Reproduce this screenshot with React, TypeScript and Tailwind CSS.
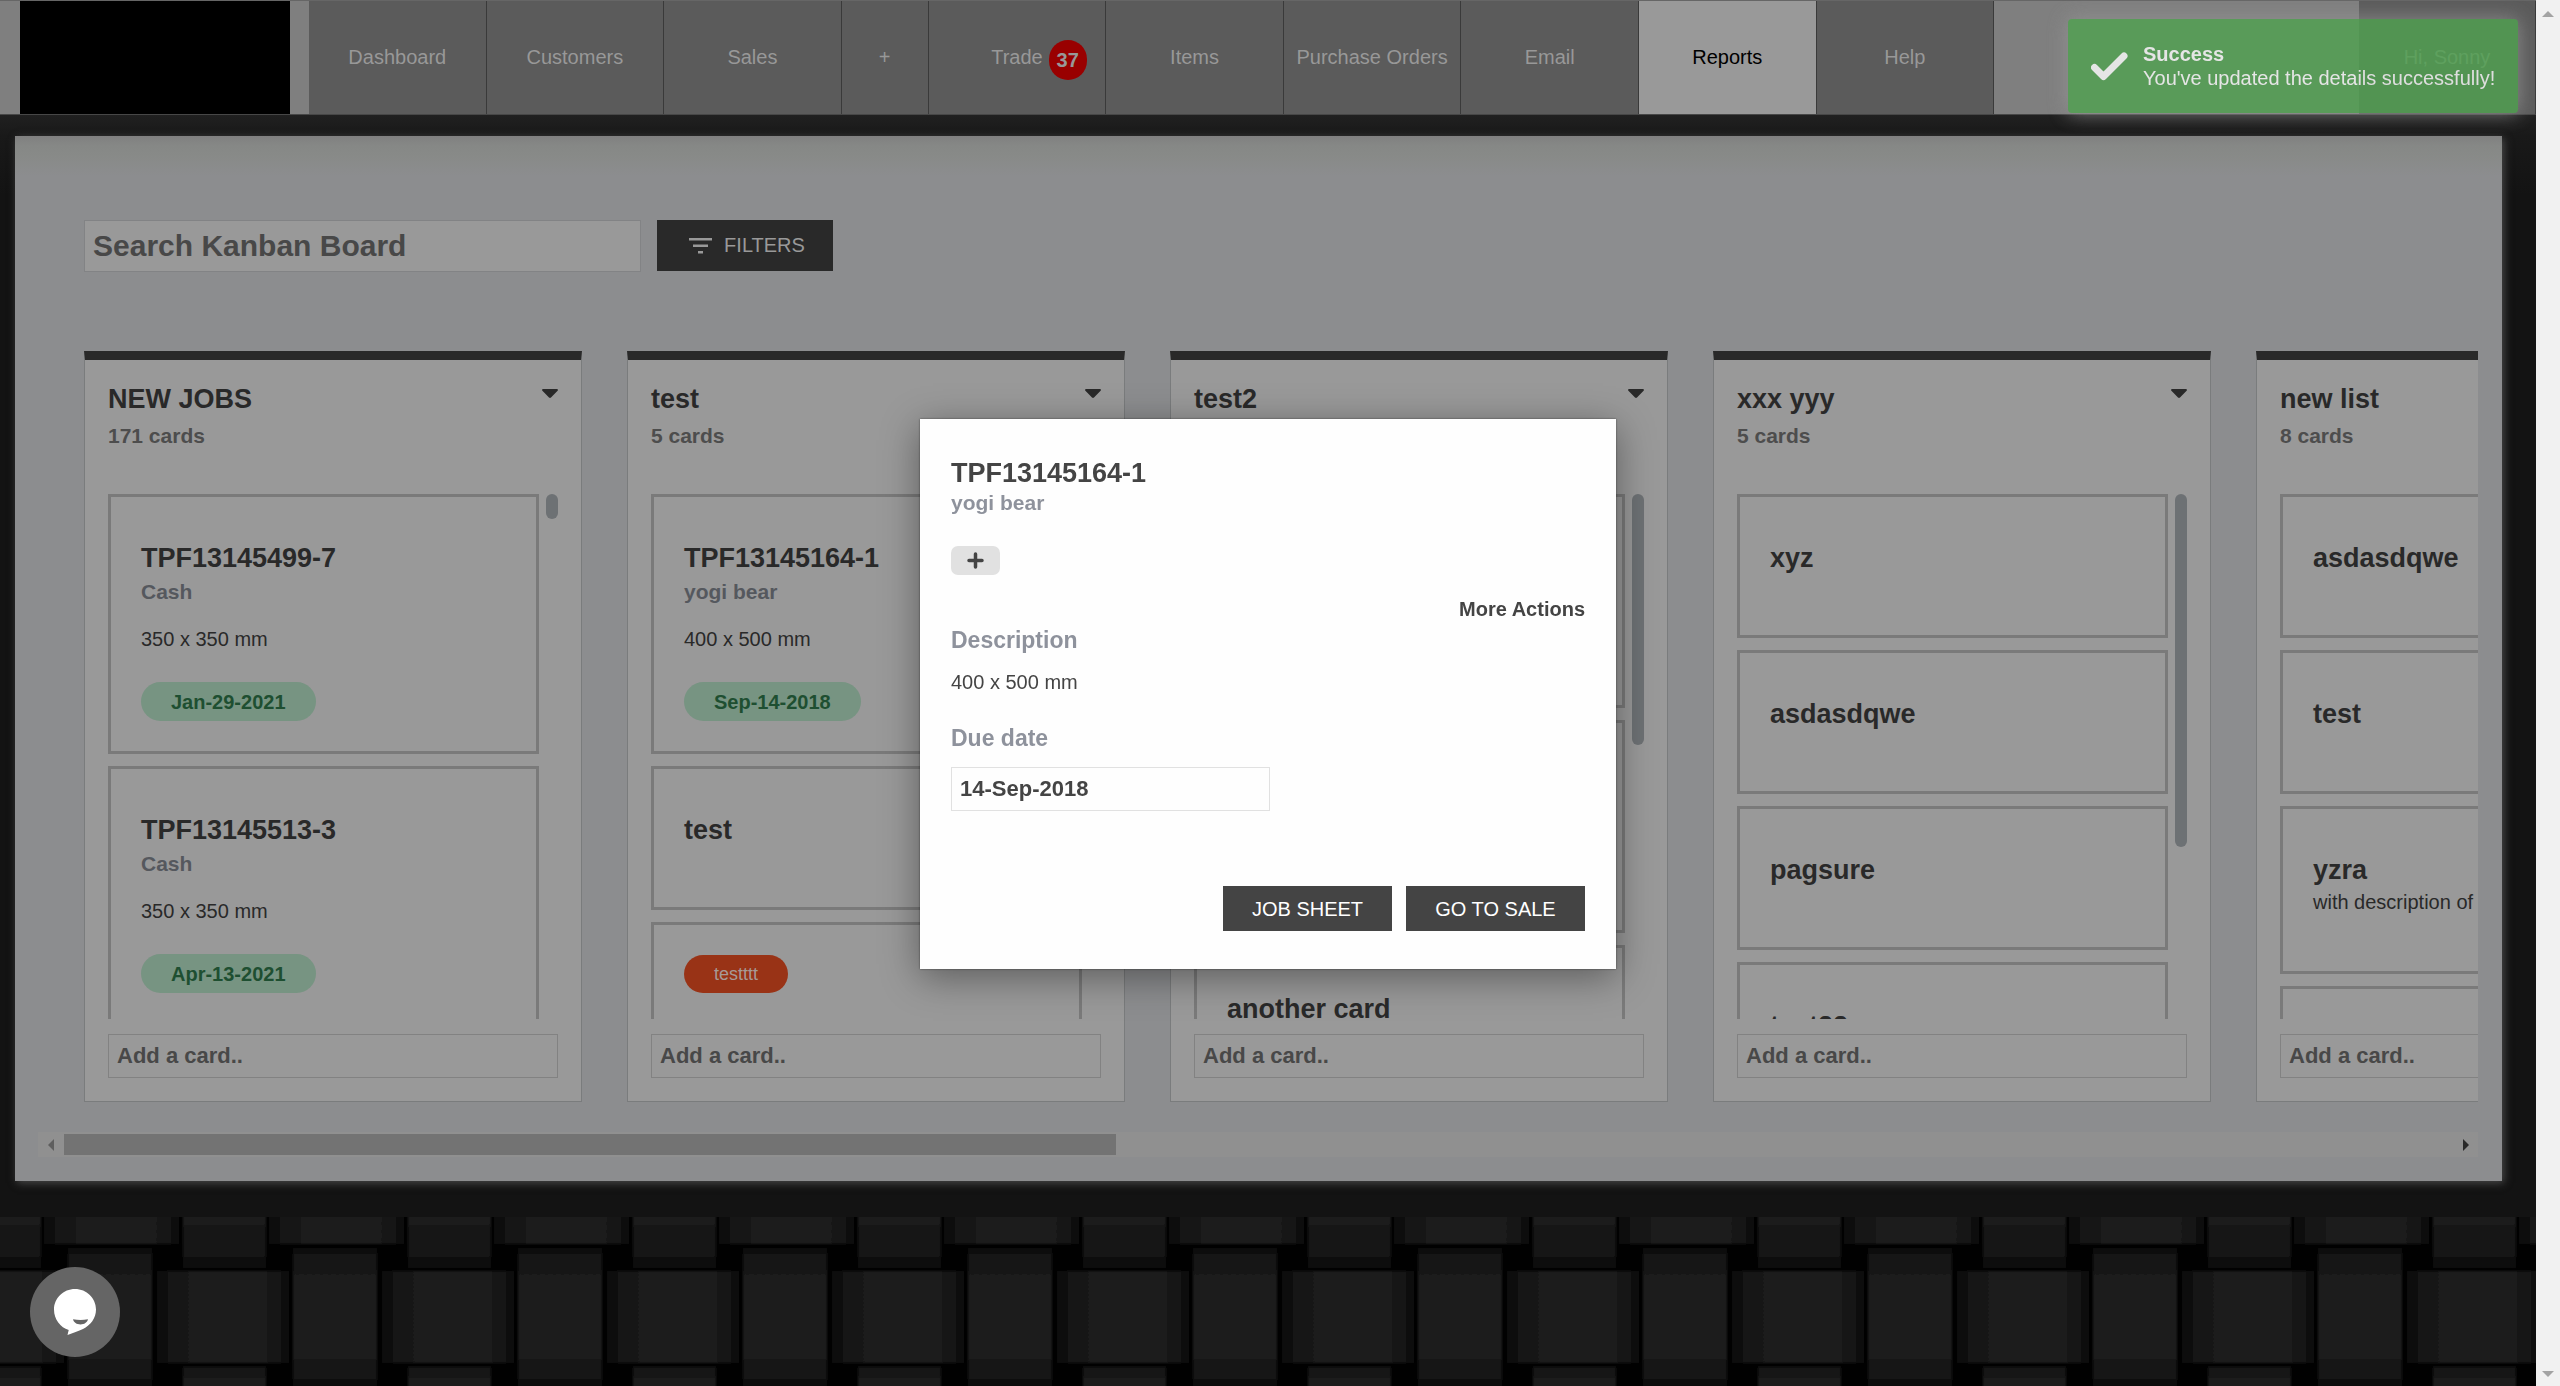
import React from "react";

type CardData = {
  title?: string;
  customer?: string;
  text?: string;
  note?: string;
  due?: string;
  tag?: string;
  size?: string;
};

type ListData = {
  title: string;
  count: string;
  thumb: string;
  cards: CardData[];
};

const lists: ListData[] = [
  {
    title: "NEW JOBS",
    count: "171 cards",
    thumb: "h-[25px]",
    cards: [
      { title: "TPF13145499-7", customer: "Cash", text: "350 x 350 mm", due: "Jan-29-2021" },
      { title: "TPF13145513-3", customer: "Cash", text: "350 x 350 mm", due: "Apr-13-2021" },
    ],
  },
  {
    title: "test",
    count: "5 cards",
    thumb: "h-[300px]",
    cards: [
      { title: "TPF13145164-1", customer: "yogi bear", text: "400 x 500 mm", due: "Sep-14-2018" },
      { title: "test" },
      { tag: "testttt" },
    ],
  },
  {
    title: "test2",
    count: "5 cards",
    thumb: "h-[251px]",
    cards: [
      { size: "min-h-[214px]" },
      { size: "min-h-[213px]" },
      { title: "another card" },
    ],
  },
  {
    title: "xxx yyy",
    count: "5 cards",
    thumb: "h-[353px]",
    cards: [{ title: "xyz" }, { title: "asdasdqwe" }, { title: "pagsure" }, { title: "test22" }],
  },
  {
    title: "new list",
    count: "8 cards",
    thumb: "h-[300px]",
    cards: [
      { title: "asdasdqwe" },
      { title: "test" },
      { title: "yzra", note: "with description of" },
      { size: "min-h-[144px]" },
    ],
  },
];

const navBefore = ["Dashboard", "Customers", "Sales"];
const navAfter = ["Items", "Purchase Orders", "Email", "Reports", "Help"];

const navItem =
  "relative flex min-w-0 flex-1 items-center justify-center whitespace-nowrap border-r border-[#3a3a3a] pb-0.5";

function Header() {
  return (
    <header className="flex h-[115px] border-t border-b border-t-[#666] border-b-[#474747] bg-[#7f7f7f] text-xl leading-6 text-[#989898]">
      <a href="#home" aria-label="Home" className="mr-[19px] ml-5 w-[270px] shrink-0 bg-black" />
      <nav className="flex w-[1685px] shrink-0">
        {navBefore.map((n) => (
          <a key={n} href="#nav" className={navItem + " bg-[#5b5b5b]"}>
            {n}
          </a>
        ))}
        <a
          href="#new"
          className="flex w-[87px] shrink-0 items-center justify-center border-r border-[#3a3a3a] bg-[#5b5b5b] pb-0.5"
        >
          +
        </a>
        <a href="#trade" className={navItem + " bg-[#5b5b5b]"}>
          Trade
          <span className="absolute top-[39px] left-[120px] flex h-10 w-[38px] items-center justify-center rounded-full bg-[#990000] font-bold">
            37
          </span>
        </a>
        {navAfter.map((n) => (
          <a
            key={n}
            href="#nav"
            className={navItem + (n === "Reports" ? " bg-[#999] text-black" : " bg-[#5b5b5b]")}
          >
            {n}
          </a>
        ))}
      </nav>
      <a
        href="#account"
        className="ml-auto flex w-[177px] shrink-0 items-center justify-center border-r border-[#3a3a3a] bg-[#5b5b5b] pb-0.5"
      >
        Hi, Sonny
      </a>
    </header>
  );
}

function Card({ card }: { card: CardData }) {
  return (
    <article
      className={
        "mb-3 shrink-0 border-[3px] border-[#7a7a7a] px-[30px] pt-[30px] " +
        (card.due ? "pb-[30px] " : "pb-[57px] ") +
        (card.size ?? "")
      }
    >
      {card.tag && (
        <span className="inline-flex h-[38px] items-center rounded-full bg-[#993316] px-[30px] text-lg text-[#a79a96]">
          {card.tag}
        </span>
      )}
      {card.title && (
        <h3 className="mt-3.5 mb-0.5 text-[27px] leading-[35px] font-bold">{card.title}</h3>
      )}
      {card.note && <p className="text-xl leading-6 whitespace-nowrap">{card.note}</p>}
      {card.customer && (
        <p className="mt-1 text-[21px] leading-6 font-bold text-[#55585e]">{card.customer}</p>
      )}
      {card.text && <p className="mt-6 text-xl leading-[23px]">{card.text}</p>}
      {card.due && (
        <span className="mt-[31px] flex h-[39px] w-fit items-center rounded-full bg-[#779482] px-[30px] text-xl font-bold text-[#1e4f31]">
          {card.due}
        </span>
      )}
    </article>
  );
}

function List({ list }: { list: ListData }) {
  return (
    <section className="w-[498px] shrink-0 border border-t-[9px] border-[#7a7c7d] border-t-[#292929] bg-[#999] px-[23px] pt-6 pb-[23px] text-[#292929]">
      <div className="flex items-start justify-between">
        <h2 className="text-[27px] leading-[31px] font-bold">{list.title}</h2>
        <button type="button" aria-label={"Options for " + list.title} className="mt-[5px]">
          <svg width="16" height="9" viewBox="0 0 16 9" fill="#292929">
            <path d="M1.2 0h13.6c1 0 1.5 1.1.8 1.8L9 8.5c-.6.6-1.4.6-2 0L.4 1.8C-.3 1.1.2 0 1.2 0z" />
          </svg>
        </button>
      </div>
      <p className="mt-[9px] text-[21px] leading-6 font-bold text-[#4d4d4d]">{list.count}</p>
      <div className="mt-[46px] flex h-[525px] justify-between overflow-hidden">
        <div className="flex w-[431px] flex-col">
          {list.cards.map((c, i) => (
            <Card key={i} card={c} />
          ))}
        </div>
        <div className={"w-3 rounded-full bg-[#6d7174] " + list.thumb} />
      </div>
      <input
        aria-label={"Add a card to " + list.title}
        placeholder="Add a card.."
        className="mt-[15px] block h-11 w-full border border-[#828282] bg-transparent px-2 text-[22px] font-bold placeholder:text-[#484848]"
      />
    </section>
  );
}

function BoardScrollbar() {
  return (
    <div className="mt-[30px] flex h-[25px] items-center bg-[#909090]">
      <div className="flex w-[26px] justify-center">
        <svg width="6" height="12" viewBox="0 0 6 12" fill="#5e5e5e">
          <path d="M6 0v12L0 6z" />
        </svg>
      </div>
      <div className="flex h-[21px] flex-1">
        <div className="h-full w-[44%] bg-[#737373]" />
      </div>
      <div className="flex w-6 justify-center">
        <svg width="6" height="12" viewBox="0 0 6 12" fill="#292929">
          <path d="M0 0v12l6-6z" />
        </svg>
      </div>
    </div>
  );
}

function Weave() {
  return (
    <svg className="h-full w-full" aria-hidden="true">
      <defs>
        <linearGradient id="band" x1="0" x2="1" y1="0" y2="0">
          <stop offset="0" stopColor="#080808" />
          <stop offset="0.1" stopColor="#141414" />
          <stop offset="0.25" stopColor="#1a1a1a" />
          <stop offset="0.55" stopColor="#1f1f1f" />
          <stop offset="0.8" stopColor="#1b1b1b" />
          <stop offset="0.92" stopColor="#131313" />
          <stop offset="1" stopColor="#040404" />
        </linearGradient>
        <linearGradient id="strip" x1="0" x2="0" y1="0" y2="1">
          <stop offset="0" stopColor="#0f0f0f" />
          <stop offset="0.15" stopColor="#191919" />
          <stop offset="0.5" stopColor="#1f1f1f" />
          <stop offset="0.8" stopColor="#1a1a1a" />
          <stop offset="1" stopColor="#0f0f0f" />
        </linearGradient>
        <linearGradient id="stripEnd" x1="0" x2="0" y1="0" y2="1">
          <stop offset="0" stopColor="#1d1d1d" />
          <stop offset="0.7" stopColor="#151515" />
          <stop offset="1" stopColor="#0c0c0c" />
        </linearGradient>
        <filter id="soft" x="-5%" y="-5%" width="110%" height="110%">
          <feGaussianBlur stdDeviation="1" />
        </filter>
        <pattern id="weave" width="225" height="190" patternUnits="userSpaceOnUse">
          <rect width="225" height="190" fill="#010101" />
          <g filter="url(#soft)">
            <rect x="-42" y="-10" width="83" height="61" fill="url(#stripEnd)" />
            <rect x="183" y="-10" width="83" height="61" fill="url(#stripEnd)" />
            <rect x="44" y="-10" width="137" height="37" fill="url(#band)" />
            <rect x="68" y="31" width="84" height="138" fill="url(#strip)" />
            <rect x="157" y="54" width="134" height="92" fill="url(#band)" />
            <rect x="-68" y="54" width="134" height="92" fill="url(#band)" />
            <rect x="-42" y="149" width="83" height="60" fill="url(#strip)" />
            <rect x="183" y="149" width="83" height="60" fill="url(#strip)" />
          </g>
        </pattern>
      </defs>
      <rect width="100%" height="100%" fill="url(#weave)" />
    </svg>
  );
}

function Toast() {
  return (
    <div
      role="status"
      className="fixed top-[19px] right-[42px] flex w-[450px] items-center rounded bg-[#51a351] py-[23px] pl-[23px] text-xl leading-6 whitespace-nowrap text-white opacity-80 shadow-[0_0_20px_#999]"
    >
      <svg className="mr-[15px] shrink-0" width="37" height="30" viewBox="0 0 37 30" fill="none">
        <path
          d="M3.5 16.500 12.500 25.500 33 5"
          stroke="white"
          strokeWidth="7"
          strokeLinecap="round"
          strokeLinejoin="round"
        />
      </svg>
      <div>
        <p className="font-bold">Success</p>
        <p>You've updated the details successfully!</p>
      </div>
    </div>
  );
}

function CardDialog() {
  return (
    <div className="pointer-events-none fixed inset-0 right-6 flex items-center justify-center pt-0.5">
      <div
        role="dialog"
        aria-labelledby="dialog-title"
        className="pointer-events-auto w-[696px] bg-[#fefefe] px-[31px] pt-[39px] pb-[38px] text-[#444] shadow-[0_0_2px_rgba(0,0,0,0.5),0_8px_36px_rgba(0,0,0,0.4)]"
      >
        <h2 id="dialog-title" className="text-[27px] leading-[31px] font-bold">
          TPF13145164-1
        </h2>
        <p className="mt-0.5 text-[21px] leading-6 font-bold text-[#8e929c]">yogi bear</p>
        <button
          type="button"
          aria-label="Add label"
          className="mt-[31px] flex h-[29px] w-[49px] items-center justify-center rounded-[7px] bg-[#e1e1e1]"
        >
          <svg width="17" height="17" viewBox="0 0 17 17" stroke="#444" strokeWidth="3.500" strokeLinecap="round">
            <path d="M8.500 2v13M2 8.500h13" />
          </svg>
        </button>
        <div className="mt-[22px] flex justify-end">
          <button type="button" className="text-xl leading-6 font-bold">
            More Actions
          </button>
        </div>
        <h3 className="mt-1.5 text-[23px] leading-[27px] font-bold text-[#8e929c]">Description</h3>
        <p className="mt-[17px] text-xl leading-[23px]">400 x 500 mm</p>
        <label htmlFor="due" className="mt-[31px] block text-[23px] leading-[27px] font-bold text-[#8e929c]">
          Due date
        </label>
        <input
          id="due"
          defaultValue="14-Sep-2018"
          className="mt-[15px] block h-11 w-[319px] border border-[#e1e1e1] bg-transparent px-2 text-[22px] font-bold"
        />
        <div className="mt-[75px] flex justify-end gap-3.5 text-xl text-white">
          <button type="button" className="h-[45px] w-[169px] bg-[#444]">
            JOB SHEET
          </button>
          <button type="button" className="h-[45px] w-[179px] bg-[#444]">
            GO TO SALE
          </button>
        </div>
      </div>
    </div>
  );
}

function PageScrollbar() {
  return (
    <div className="flex w-6 shrink-0 flex-col items-center justify-between bg-[#f1f1f1] pt-[11px] pb-[9px]">
      <svg width="12" height="6" viewBox="0 0 12 6" fill="#a3a3a3">
        <path d="M0 6h12L6 0z" />
      </svg>
      <svg width="12" height="6" viewBox="0 0 12 6" fill="#a3a3a3">
        <path d="M0 0h12L6 6z" />
      </svg>
    </div>
  );
}

export default function App() {
  return (
    <div className="flex min-h-screen w-full overflow-hidden bg-black font-['Liberation_Sans',Arial,sans-serif]">
      <div className="flex min-w-0 flex-1 flex-col">
        <Header />
        <div className="bg-[#131313] bg-[linear-gradient(#202020,#191919_21px,#131313_80px)] pt-[21px] pr-[34px] pb-9 pl-[15px]">
          <main className="bg-[#8c8d8f] bg-[linear-gradient(#808080,#868886_10px,#888a88_20px,#8c8d8f_40px)] pt-[84px] pr-6 pb-6 pl-[23px] shadow-[2px_2px_8px_#4a4a4a]">
            <div className="flex gap-4 pl-[46px]">
              <input
                aria-label="Search Kanban Board"
                placeholder="Search Kanban Board"
                className="h-[52px] w-[557px] border border-[#828385] bg-[#999] px-2 text-[30px] font-bold placeholder:text-[#484848]"
              />
              <button
                type="button"
                className="flex h-[51px] w-[176px] items-center justify-center gap-3 bg-[#292929] pb-0.5 pl-1 text-xl text-[#999]"
              >
                <svg className="mt-0.5" width="23" height="16" viewBox="0 0 23 16" fill="#999">
                  <path d="M0 0h23v2.500H0zM4 6.500h15V9H4zM9 13h5v2.500H9z" />
                </svg>
                FILTERS
              </button>
            </div>
            <div className="mt-[79px] flex gap-[45px] overflow-hidden pl-[46px]">
              {lists.map((l) => (
                <List key={l.title} list={l} />
              ))}
            </div>
            <BoardScrollbar />
          </main>
        </div>
        <footer className="h-[169px] flex-1">
          <Weave />
        </footer>
      </div>
      <PageScrollbar />
      <button
        type="button"
        aria-label="Open chat"
        className="fixed bottom-[29px] left-[30px] size-[90px] rounded-full bg-[#656565]"
      >
        <svg width="90" height="90" viewBox="0 0 90 90">
          <path
            fill="white"
            d="M45 22c11.600 0 21 9.200 21 20.500 0 9-5.500 15.500-13 19.500-4.500 2.300-10 3.800-15.500 6l1.200-5C30.500 60.500 24 52.500 24 42.500 24 31.200 33.400 22 45 22z"
          />
          <path fill="#656565" d="M43 52.300c5 .8 10 .8 15 0-.8 3.200-3.700 5.200-7.500 5.200S43.800 55.500 43 52.300z" />
        </svg>
      </button>
      <CardDialog />
      <Toast />
    </div>
  );
}
